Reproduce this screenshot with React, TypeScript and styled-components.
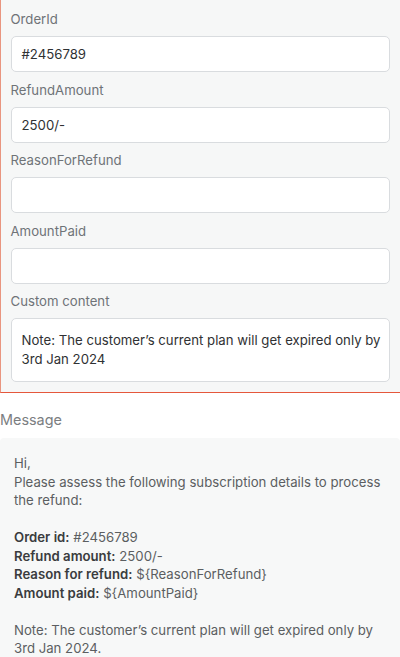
import React from "react";
import styled, { createGlobalStyle } from "styled-components";

const GlobalStyle = createGlobalStyle`
  body {
    margin: 0;
    background: #ffffff;
    font-family: Inter, "Noto Sans", "Liberation Sans", sans-serif;
    -webkit-font-smoothing: antialiased;
  }
`;

// Editable variables panel (highlighted with an orange edge)
const Panel = styled.section`
  background: #f6f7f7;
  border-left: 1.5px solid #e9957f;
  border-bottom: 1.5px solid #e5573c;
  padding: 9px 10px 10px 9.5px;
  display: flex;
  flex-direction: column;
  gap: 7.5px;
`;

const Field = styled.div`
  display: flex;
  flex-direction: column;
`;

const Label = styled.label`
  font-size: 13.2px;
  line-height: 20px;
  color: #6f7377;
  margin-bottom: 7px;
`;

const Input = styled.div<{ $multiline?: boolean }>`
  box-sizing: border-box;
  background: #ffffff;
  border: 1px solid #d9dcdf;
  border-radius: 5px;
  font-size: 13.2px;
  color: #2f3133;
  padding: ${(p) => (p.$multiline ? "12px 4px 12px 10px" : "0 10px")};
  line-height: ${(p) => (p.$multiline ? "19px" : "34px")};
  min-height: ${(p) => (p.$multiline ? "63px" : "36px")};
`;

const MessageLabel = styled.h2`
  margin: 0;
  padding: 17px 0 8px;
  font-size: 14.4px;
  font-weight: 400;
  line-height: 20px;
  color: #7b7e81;
`;

const MessageBox = styled.div`
  background: #f7f8f8;
  border-radius: 4px 4px 0 0;
  padding: 16px 8px 8px 14px;
  font-size: 13.2px;
  line-height: 18.5px;
  color: #5b5e61;
`;

const Line = styled.div<{ $gap?: boolean }>`
  margin-top: ${(p) => (p.$gap ? "18.5px" : "0")};
`;

const Key = styled.strong`
  font-weight: 600;
  color: #3a3c3e;
`;

const fields = [
  { label: "OrderId", value: "#2456789" },
  { label: "RefundAmount", value: "2500/-" },
  { label: "ReasonForRefund", value: "" },
  { label: "AmountPaid", value: "" },
];

const details = [
  { key: "Order id:", value: "#2456789" },
  { key: "Refund amount:", value: "2500/-" },
  { key: "Reason for refund:", value: "${ReasonForRefund}" },
  { key: "Amount paid:", value: "${AmountPaid}" },
];

const note = "Note: The customer\u2019s current plan will get expired only by 3rd Jan 2024";

export default function App() {
  return (
    <>
      <GlobalStyle />
      <Panel>
        {fields.map((f) => (
          <Field key={f.label}>
            <Label>{f.label}</Label>
            <Input>{f.value}</Input>
          </Field>
        ))}
        <Field>
          <Label>Custom content</Label>
          <Input $multiline>{note}</Input>
        </Field>
      </Panel>
      <MessageLabel>Message</MessageLabel>
      <MessageBox>
        <Line>Hi,</Line>
        <Line>Please assess the following subscription details to process the refund:</Line>
        {details.map((d, i) => (
          <Line key={d.key} $gap={i === 0}>
            <Key>{d.key}</Key> {d.value}
          </Line>
        ))}
        <Line $gap>{`${note}.`}</Line>
      </MessageBox>
    </>
  );
}
